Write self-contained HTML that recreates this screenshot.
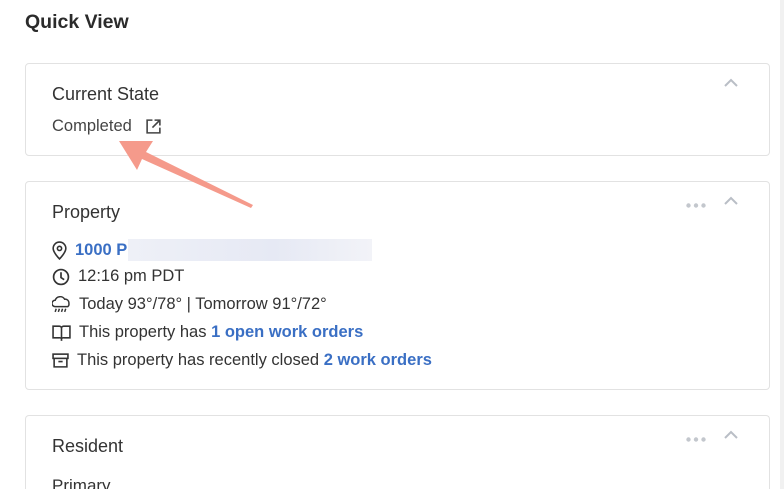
<!DOCTYPE html>
<html><head><meta charset="utf-8"><style>
*{box-sizing:border-box;margin:0;padding:0}
html,body{width:784px;height:489px;overflow:hidden}
body{background:#fff;font-family:"Liberation Sans",sans-serif;color:#333;position:relative}
h1{position:absolute;left:25px;top:11px;font-size:19.5px;font-weight:bold;color:#2b2b2b}
.card{position:absolute;left:25px;width:745px;border:1px solid #e2e2e2;border-radius:4px;background:#fff}
.title{position:absolute;left:26px;font-size:18px;color:#333}
.row{position:absolute;left:26px;font-size:16.5px;color:#333;display:flex;align-items:center;white-space:nowrap}
.row svg{margin-right:8px}
a{color:#3a6fc4;font-weight:bold;text-decoration:none}
.chev{position:absolute;right:30px}
.dots{position:absolute;right:63px}
.sb{position:absolute;left:780px;top:0;width:4px;height:489px;background:#f1f1f1}
</style></head><body>
<h1>Quick View</h1>
<div class="card" style="top:63px;height:93px">
  <div class="title" style="top:20px">Current State</div>
  <div class="row" style="top:53px;color:#444">Completed
    <svg style="margin-left:13px" width="17" height="17" viewBox="0 0 16 16" fill="none" stroke="#444" stroke-width="1.5"><path d="M7 2H2v12h12V9"/><path d="M9 2h5v5M14 2L7 9"/></svg></div>
  <svg class="chev" style="top:14px" width="16" height="10" viewBox="0 0 16 10" fill="none" stroke="#b9bec6" stroke-width="2"><path d="M2 8l6-6 6 6"/></svg>
</div>
<div class="card" style="top:181px;height:209px">
  <div class="title" style="top:20px">Property</div>
  <svg class="dots" style="top:21px" width="20" height="5"><circle cx="2.5" cy="2.5" r="2.2" fill="#c3c7cd"/><circle cx="10" cy="2.5" r="2.2" fill="#c3c7cd"/><circle cx="17.5" cy="2.5" r="2.2" fill="#c3c7cd"/></svg>
  <svg class="chev" style="top:14px" width="16" height="10" viewBox="0 0 16 10" fill="none" stroke="#b9bec6" stroke-width="2"><path d="M2 8l6-6 6 6"/></svg>
  <div class="row" style="top:57px"><svg width="15" height="19" viewBox="0 0 14 18" fill="none" stroke="#333" stroke-width="1.5"><path d="M7 17s-6-6-6-10a6 6 0 0112 0c0 4-6 10-6 10z"/><circle cx="7" cy="7" r="2"/></svg><a>1000 P</a><span style="display:inline-block;width:244px;height:22px;margin-left:1px;background:linear-gradient(90deg,#eef0f7,#e6e9f4 60%,#f2f3f8)"></span></div>
  <div class="row" style="top:85px"><svg width="18" height="18" viewBox="0 0 17 17" fill="none" stroke="#333" stroke-width="1.6"><circle cx="8.5" cy="8.5" r="7"/><path d="M8.5 4v5l3 2"/></svg>12:16 pm PDT</div>
  <div class="row" style="top:113px"><svg width="19" height="19" viewBox="0 0 18 18" fill="none" stroke="#333" stroke-width="1.4"><path d="M3 11a3 3 0 010-6 5 5 0 019-1 3.5 3.5 0 014 4 3 3 0 01-1 3z"/><path d="M4 13l-1 3M7 13l-1 3M10 13l-1 3M13 13l-1 3"/></svg>Today 93°/78° | Tomorrow 91°/72°</div>
  <div class="row" style="top:141px"><svg width="19" height="17" viewBox="0 0 18 16" fill="none" stroke="#333" stroke-width="1.5"><path d="M1 2h6a2 2 0 012 2v10a2 2 0 00-2-1H1zM17 2h-6a2 2 0 00-2 2v10a2 2 0 012-1h6z"/></svg>This property has&nbsp;<a>1 open work orders</a></div>
  <div class="row" style="top:169px"><svg width="17" height="17" viewBox="0 0 16 16" fill="none" stroke="#333" stroke-width="1.5"><rect x="1" y="2" width="14" height="4"/><path d="M2 6v8h12V6M6 9h4"/></svg>This property has recently closed&nbsp;<a>2 work orders</a></div>
</div>
<div class="card" style="top:415px;height:74px;border-bottom:none;border-radius:4px 4px 0 0;overflow:hidden">
  <div class="title" style="top:20px">Resident</div>
  <svg class="dots" style="top:21px" width="20" height="5"><circle cx="2.5" cy="2.5" r="2.2" fill="#c3c7cd"/><circle cx="10" cy="2.5" r="2.2" fill="#c3c7cd"/><circle cx="17.5" cy="2.5" r="2.2" fill="#c3c7cd"/></svg>
  <svg class="chev" style="top:14px" width="16" height="10" viewBox="0 0 16 10" fill="none" stroke="#b9bec6" stroke-width="2"><path d="M2 8l6-6 6 6"/></svg>
  <div class="title" style="top:60px;font-size:17px">Primary</div>
</div>
<svg style="position:absolute;left:0;top:0" width="784" height="489"><path d="M119 141L153 141L146 152L253 205L251 208L142 159L137 170Z" fill="#f59a8b"/></svg>
<div class="sb"></div>
</body></html>
